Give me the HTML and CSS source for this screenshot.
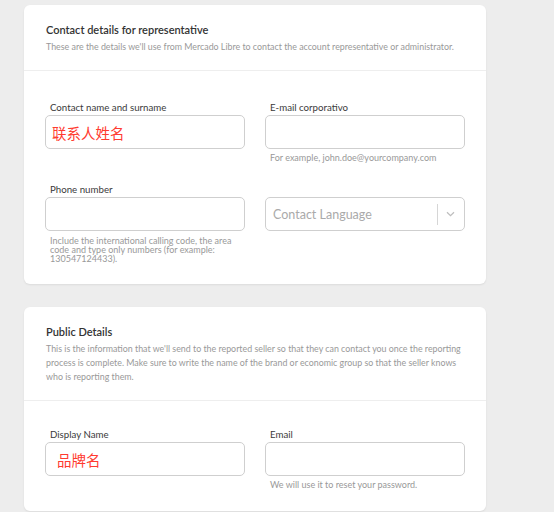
FILE: index.html
```html
<!DOCTYPE html>
<html lang="en">
<head>
    <meta charset="UTF-8">
    <meta name="viewport" content="width=device-width, initial-scale=1.0">
    <title>Contact details</title>
    <link rel="stylesheet" href="styles.css">
</head>
<body>
    <section class="card">
        <div class="card-head">
            <h2>Contact details for representative</h2>
            <p>These are the details we'll use from Mercado Libre to contact the account representative or administrator.</p>
        </div>
        <div class="card-body">
            <div class="field">
                <label>Contact name and surname</label>
                <div class="input"><span class="value">联系人姓名</span></div>
            </div>
            <div class="field">
                <label>E-mail corporativo</label>
                <div class="input"></div>
                <small>For example, john.doe@yourcompany.com</small>
            </div>
            <div class="field">
                <label>Phone number</label>
                <div class="input"></div>
                <small class="multi">Include the international calling code, the area code and type only numbers (for example: 130547124433).</small>
            </div>
            <div class="field">
                <label>&nbsp;</label>
                <div class="select">
                    <span class="placeholder">Contact Language</span>
                    <span class="sep"></span>
                    <svg class="chevron" width="9" height="6" viewBox="0 0 9 6"><path d="M1 1.2l3.5 3.4 3.5-3.4" fill="none" stroke="#bdbdbd" stroke-width="1.2"/></svg>
                </div>
            </div>
        </div>
    </section>

    <section class="card">
        <div class="card-head">
            <h2>Public Details</h2>
            <p>This is the information that we'll send to the reported seller so that they can contact you once the reporting process is complete. Make sure to write the name of the brand or economic group so that the seller knows who is reporting them.</p>
        </div>
        <div class="card-body tight">
            <div class="field">
                <label>Display Name</label>
                <div class="input"><span class="value wide">品牌名</span></div>
            </div>
            <div class="field">
                <label>Email</label>
                <div class="input"></div>
                <small>We will use it to reset your password.</small>
            </div>
        </div>
    </section>
</body>
</html>
```

FILE: styles.css
```css
body {
    margin: 0;
    padding: 5px 0 0 24px;
    background: #ededed;
    font-family: Lato, "Noto Sans", sans-serif;
    color: #333;
}
.card {
    width: 462px;
    background: #fff;
    border-radius: 6px;
    box-shadow: 0 1px 2px rgba(0,0,0,0.08);
    margin-bottom: 23px;
}
.card-head {
    padding: 17px 20px 16px 22px;
    border-bottom: 1px solid #eeeeee;
}
.card-head h2 {
    margin: 0 0 2px 0;
    font-size: 11px;
    line-height: 16px;
    font-weight: 600;
    color: #333;
}
.card-head p {
    margin: 0;
    font-size: 8.85px;
    line-height: 14px;
    color: #999;
}
.card-body {
    display: grid;
    grid-template-columns: 200px 200px;
    column-gap: 20px;
    row-gap: 20px;
    align-items: start;
    padding: 30px 21px 21px 21px;
}
.card-body.tight {
    padding-top: 27px;
}
.field {
    display: flex;
    flex-direction: column;
}
.field label {
    font-size: 9.7px;
    line-height: 12px;
    padding-left: 5px;
    margin-bottom: 2px;
    color: #3a3a3a;
}
.input, .select {
    height: 34px;
    box-sizing: border-box;
    border: 1px solid #cfcfcf;
    border-radius: 5px;
    display: flex;
    align-items: center;
}
.value {
    font-family: "Noto Sans CJK SC", sans-serif;
    color: #ff3b30;
    font-size: 14.5px;
    padding-left: 6px;
}
.value.wide {
    padding-left: 11px;
}
.field small {
    font-size: 9px;
    line-height: 10px;
    padding-left: 5px;
    margin-top: 4px;
    color: #999;
}
.field small.multi {
    line-height: 9px;
    margin-top: 5px;
    padding-right: 10px;
}
.select {
    padding-left: 7px;
}
.placeholder {
    flex: 1;
    font-size: 12.5px;
    color: #aaa;
}
.sep {
    width: 1px;
    height: 21px;
    background: #d6d6d6;
    margin-right: 8px;
}
.chevron {
    margin-right: 9px;
}
```
